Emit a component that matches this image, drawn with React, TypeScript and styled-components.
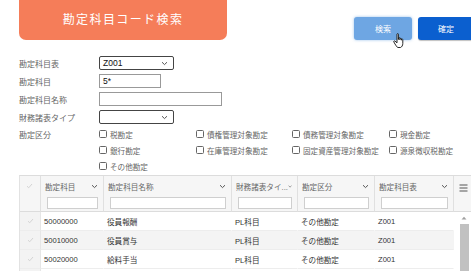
import React from "react";
import styled, { createGlobalStyle } from "styled-components";

const Global = createGlobalStyle`
  html, body { margin: 0; padding: 0; background: #fff; overflow: hidden; }
  body {
    font-family: "Liberation Sans", "Noto Sans CJK JP", sans-serif;
    width: 471px; height: 271px; color: #333;
  }
  * { box-sizing: border-box; }
`;

const Page = styled.div`
  position: relative;
  width: 471px;
  height: 271px;
  overflow: hidden;
`;

const TopBar = styled.div`
  display: flex;
  align-items: flex-start;
  height: 54px;
  padding-left: 19px;
`;

const Banner = styled.div`
  flex-shrink: 0;
  width: 208px;
  height: 40px;
  background: #f57d59;
  border-radius: 0 0 7px 7px;
  color: #fff;
  font-size: 12px;
  letter-spacing: 1.4px;
  display: flex;
  align-items: center;
  justify-content: center;
  padding-bottom: 4px;
`;

const Buttons = styled.div`
  display: flex;
  flex-shrink: 0;
  gap: 6px;
  margin-left: 127px;
  margin-top: 17px;
`;

const Btn = styled.button<{ $primary?: boolean }>`
  width: ${(p) => (p.$primary ? "56px" : "58px")};
  height: 23px;
  border: none;
  border-radius: 3px;
  color: #fff;
  font-family: "Liberation Serif", "Noto Sans CJK JP", serif;
  font-size: 8px;
  padding: 0;
  background: ${(p) => (p.$primary ? "#0b5fcf" : "#6ea6e3")};
  box-shadow: ${(p) => (p.$primary ? "0 1px 1px rgba(0,0,0,0.25)" : "0 0 3px rgba(110,166,227,0.7)")};
`;

const Form = styled.div`
  display: flex;
  flex-direction: column;
  padding-left: 19px;
`;

const FormRow = styled.div`
  display: flex;
  align-items: center;
  height: 18px;
`;

const Label = styled.div`
  flex-shrink: 0;
  width: 80px;
  font-size: 8px;
  color: #666;
`;

const Select = styled.div<{ $w: number }>`
  width: ${(p) => p.$w}px;
  height: 14px;
  border: 1px solid #444;
  border-radius: 2px;
  display: flex;
  align-items: center;
  justify-content: space-between;
  padding: 0 5px 0 3px;
  font-size: 8.5px;
  color: #111;
`;

const Input = styled.div<{ $w: number }>`
  width: ${(p) => p.$w}px;
  height: 14px;
  border: 1px solid #999;
  display: flex;
  align-items: center;
  padding-left: 3px;
  font-size: 8.5px;
  color: #111;
`;

const KubunRow = styled.div`
  display: flex;
  align-items: flex-start;
`;

const KubunLabel = styled(Label)`
  height: 16px;
  display: flex;
  align-items: center;
`;

const CheckGrid = styled.div`
  flex-shrink: 0;
  display: grid;
  grid-template-columns: 97px 96px 97px 97px;
  grid-auto-rows: 16px;
`;

const CheckItem = styled.div`
  display: flex;
  align-items: center;
  gap: 3px;
  font-size: 7.6px;
  color: #666;
  white-space: nowrap;
`;

const Box = styled.span`
  width: 8px;
  height: 8px;
  border: 1px solid #666;
  border-radius: 1.5px;
  background: #fff;
`;

const GridWrap = styled.div`
  margin-left: 19px;
  margin-top: 1px;
  width: 460px;
  display: grid;
  grid-template-columns: 21px 63px 128px 66px 77px 79px 26px;
  border-top: 1px solid #dcdcdc;
  border-left: 1px solid #e2e2e2;
`;

const HeadCell = styled.div<{ $first?: boolean }>`
  height: 36px;
  background: #f6f6f6;
  border-right: 1px solid #e0e0e0;
  border-bottom: 1px solid #dcdcdc;
  padding: 3px 5px 0 4px;
  display: flex;
  flex-direction: column;
  align-items: ${(p) => (p.$first ? "center" : "stretch")};
`;

const HeadTitle = styled.div`
  display: flex;
  justify-content: space-between;
  align-items: center;
  height: 14px;
  font-size: 7.6px;
  color: #666;
  white-space: nowrap;
  overflow: hidden;
`;

const Filter = styled.div`
  margin-top: 4px;
  height: 12px;
  background: #fff;
  border: 1px solid #cfcfcf;
  margin-left: 2px;
`;

const MenuCell = styled.div`
  height: 36px;
  background: #f6f6f6;
  border-bottom: 1px solid #dcdcdc;
  display: flex;
  justify-content: flex-start;
  padding: 6px 0 0 4px;
`;

const MenuBtn = styled.div`
  width: 10px;
  height: 12px;
  display: flex;
  align-items: center;
  justify-content: center;
`;

const Cell = styled.div<{ $alt?: boolean; $chk?: boolean }>`
  height: 19px;
  display: flex;
  align-items: center;
  justify-content: ${(p) => (p.$chk ? "center" : "flex-start")};
  padding-left: ${(p) => (p.$chk ? "0" : "3px")};
  font-size: 7.6px;
  color: #333;
  background: ${(p) => (p.$chk ? "#f3f3f3" : p.$alt ? "#f4f4f4" : "#fff")};
  border-right: 1px solid ${(p) => (p.$chk ? "#e6e6e6" : "transparent")};
  border-bottom: 1px solid #ededed;
  white-space: nowrap;
`;

const ScrollCol = styled.div`
  grid-column: 7;
  grid-row: 2 / span 4;
  display: flex;
  flex-direction: column;
  align-items: flex-start;
  padding-left: 5px;
  background: #fff;
`;

const ScrollArrow = styled.div`
  width: 10px;
  height: 12px;
  display: flex;
  align-items: center;
  justify-content: center;
`;

const Thumb = styled.div`
  width: 9px;
  flex: 1;
  background: #c1c1c1;
  margin-left: 0.5px;
`;

const Cursor = styled.svg`
  position: absolute;
  left: 393px;
  top: 33px;
`;

const Chevron = () => (
  <svg width="7" height="5" viewBox="0 0 7 5">
    <path d="M1 1.2 L3.5 3.6 L6 1.2" fill="none" stroke="#555" strokeWidth="1" />
  </svg>
);

const Check = () => (
  <svg width="7" height="6" viewBox="0 0 7 6">
    <path d="M1 3.2 L2.7 4.8 L6 1" fill="none" stroke="#cfcfcf" strokeWidth="0.9" />
  </svg>
);

const columns = ["勘定科目", "勘定科目名称", "財務諸表タイ...", "勘定区分", "勘定科目表"];

const rows = [
  ["50000000", "役員報酬", "PL科目", "その他勘定", "Z001"],
  ["50010000", "役員賞与", "PL科目", "その他勘定", "Z001"],
  ["50020000", "給料手当", "PL科目", "その他勘定", "Z001"],
  ["", "", "", "", ""],
];

const checks = [
  "税勘定",
  "債権管理対象勘定",
  "債務管理対象勘定",
  "現金勘定",
  "銀行勘定",
  "在庫管理対象勘定",
  "固定資産管理対象勘定",
  "源泉徴収税勘定",
  "その他勘定",
];

export default function App() {
  return (
    <Page>
      <Global />
      <TopBar>
        <Banner>勘定科目コード検索</Banner>
        <Buttons>
          <Btn>検索</Btn>
          <Btn $primary>確定</Btn>
        </Buttons>
      </TopBar>
      <Form>
        <FormRow>
          <Label>勘定科目表</Label>
          <Select $w={75}>
            <span>Z001</span>
            <Chevron />
          </Select>
        </FormRow>
        <FormRow>
          <Label>勘定科目</Label>
          <Input $w={62}>5*</Input>
        </FormRow>
        <FormRow>
          <Label>勘定科目名称</Label>
          <Input $w={123} />
        </FormRow>
        <FormRow>
          <Label>財務諸表タイプ</Label>
          <Select $w={75}>
            <span />
            <Chevron />
          </Select>
        </FormRow>
        <KubunRow>
          <KubunLabel>勘定区分</KubunLabel>
          <CheckGrid>
            {checks.map((c) => (
              <CheckItem key={c}>
                <Box />
                {c}
              </CheckItem>
            ))}
          </CheckGrid>
        </KubunRow>
      </Form>
      <GridWrap>
        <HeadCell $first>
          <HeadTitle>
            <Check />
          </HeadTitle>
        </HeadCell>
        {columns.map((c) => (
          <HeadCell key={c}>
            <HeadTitle>
              <span>{c}</span>
              <Chevron />
            </HeadTitle>
            <Filter />
          </HeadCell>
        ))}
        <MenuCell>
          <MenuBtn>
            <svg width="9" height="8" viewBox="0 0 9 8">
              <path d="M0.5 1 H8.5 M0.5 4 H8.5 M0.5 7 H8.5" stroke="#555" strokeWidth="1.1" />
            </svg>
          </MenuBtn>
        </MenuCell>
        {rows.map((r, i) => (
          <React.Fragment key={i}>
            <Cell $chk>{r[0] ? <Check /> : null}</Cell>
            {r.map((v, j) => (
              <Cell key={j} $alt={i === 1}>
                {v}
              </Cell>
            ))}
          </React.Fragment>
        ))}
        <ScrollCol>
          <ScrollArrow>
            <svg width="6" height="4" viewBox="0 0 6 4">
              <path d="M0.5 3.5 L3 0.8 L5.5 3.5 Z" fill="#a0a0a0" />
            </svg>
          </ScrollArrow>
          <Thumb />
        </ScrollCol>
      </GridWrap>
      <Cursor width="13" height="16" viewBox="0 0 13 16">
        <path
          d="M4 1.2 C4 0.5 5.4 0.5 5.4 1.2 L5.4 6.5 L5.5 5.2 C5.5 4.5 6.9 4.5 6.9 5.2 L6.9 6.8 L7 5.8 C7 5.1 8.4 5.1 8.4 5.8 L8.4 7.2 L8.5 6.5 C8.5 5.900 9.8 5.9 9.8 6.6 L9.8 10.5 C9.8 12.5 8.8 14 7.5 14.5 L4.8 14.5 C3.8 14 3 12.6 2 11 L0.8 8.9 C0.4 8.2 1.3 7.5 2 8.1 L4 9.8 Z"
          fill="#fff"
          stroke="#111"
          strokeWidth="0.9"
          strokeLinejoin="round"
        />
      </Cursor>
    </Page>
  );
}
